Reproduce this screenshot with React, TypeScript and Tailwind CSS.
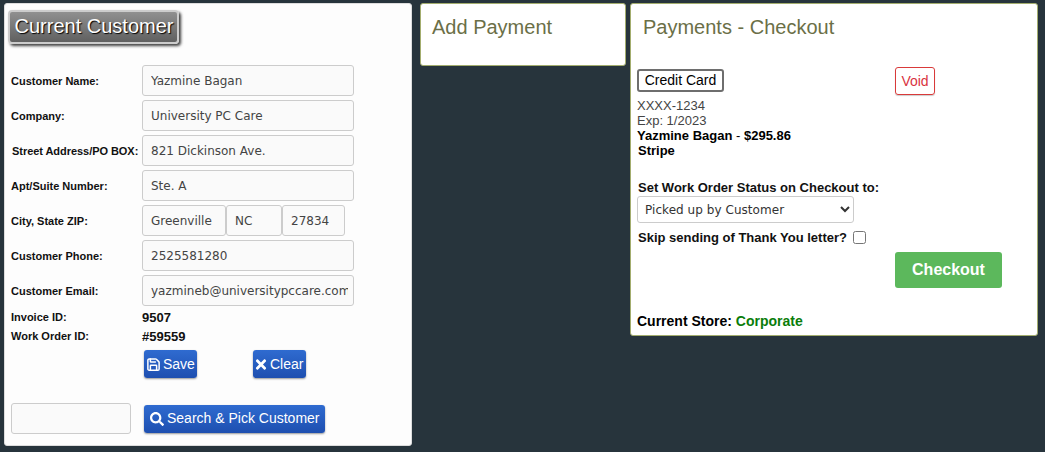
import React from 'react';
import { FaTimes, FaSearch } from 'react-icons/fa';
import { Save } from 'lucide-react';

const inputClass =
  "h-[31px] rounded-[3px] border border-[#ccc] bg-[#fafafa] pl-[8px] pr-[5px] font-['DejaVu_Sans',sans-serif] text-[12px] text-[#444] outline-none";

const blueButton =
  'flex h-[28px] items-center rounded-[3px] bg-gradient-to-b from-[#2f6bd0] to-[#1e4fb0] text-[14px] text-white shadow-[0_1px_2px_rgba(0,0,0,0.4)]';

const Field: React.FC<{ label: string; value: string; labelClass?: string }> = ({ label, value, labelClass = '' }) => (
  <div className="mb-[4px] flex h-[31px] items-center">
    <div className="w-[131px] shrink-0 pt-[1px]">
      <label className={`block text-[11px] font-bold text-[#111] ${labelClass}`}>{label}</label>
    </div>
    <input readOnly value={value} className={`${inputClass} w-[212px]`} />
  </div>
);

const App: React.FC = () => {
  return (
    <div className="flex h-[452px] w-[1045px] items-start overflow-hidden bg-[#27343c] pt-[3px] pl-[4px] font-['Liberation_Sans',Arial,sans-serif]">
      {/* customer panel */}
      <div className="h-[443px] w-[408px] shrink-0 rounded-[3px] border border-[#ddd] bg-[#fdfdfd] pl-[6px]">
        <div className="mt-[6px] -ml-[3px] h-[34px] w-[171px] rounded-[4px] border-2 border-[#ccc] bg-gradient-to-b from-[#909090] to-[#606060] pl-[1px] text-center text-[20px] leading-[29px] text-white shadow-[2px_2px_3px_rgba(0,0,0,0.75)] [text-shadow:1px_1px_1px_#000]">
          Current Customer
        </div>
        <div className="mt-[21px]">
          <Field label="Customer Name:" value="Yazmine Bagan" />
          <Field label="Company:" value="University PC Care" />
          <Field label="Street Address/PO BOX:" value="821 Dickinson Ave." labelClass="ml-[1px] tracking-[-0.05px]" />
          <Field label="Apt/Suite Number:" value="Ste. A" />
          <div className="mb-[4px] flex h-[31px] items-center">
            <label className="w-[131px] shrink-0 pt-[1px] text-[11px] font-bold text-[#111]">City, State ZIP:</label>
            <input readOnly value="Greenville" className={`${inputClass} w-[84px]`} />
            <input readOnly value="NC" className={`${inputClass} w-[56px]`} />
            <input readOnly value="27834" className={`${inputClass} w-[63px]`} />
          </div>
          <Field label="Customer Phone:" value="2525581280" />
          <Field label="Customer Email:" value="yazmineb@universitypccare.com" />
        </div>
        <div className="-mt-[2px] flex h-[19px] items-center">
          <span className="w-[131px] text-[11px] font-bold text-[#111]">Invoice ID:</span>
          <span className="text-[13px] font-bold text-[#111]">9507</span>
        </div>
        <div className="flex h-[19px] items-center">
          <span className="w-[131px] text-[11px] font-bold text-[#111]">Work Order ID:</span>
          <span className="text-[13px] font-bold text-[#111]">#59559</span>
        </div>
        <div className="mt-[4px] ml-[133px] flex">
          <button className={`${blueButton} w-[53px] gap-[2px] pl-[2px]`}>
            <Save size={15} strokeWidth={2.4} />
            Save
          </button>
          <button className={`${blueButton} ml-[56px] w-[53px] gap-[3px] pl-[2px]`}>
            <FaTimes className="h-[15px] w-[12px]" />
            Clear
          </button>
        </div>
        <div className="mt-[25px] flex items-center">
          <input readOnly className="h-[31px] w-[120px] rounded-[3px] border border-[#ccc] bg-[#fafafa]" />
          <button className={`${blueButton} ml-[13px] w-[181px] gap-[3px] pl-[6px]`}>
            <FaSearch className="h-[14px] w-[14px]" />
            Search &amp; Pick Customer
          </button>
        </div>
      </div>

      {/* add payment */}
      <div className="ml-[8px] h-[63px] w-[206px] shrink-0 rounded-[3px] border border-[#a3ad6e] bg-white pt-[10px] pl-[11px] text-[20px] leading-[26px] text-[#6b6f47]">
        Add Payment
      </div>

      {/* checkout */}
      <div className="ml-[4px] h-[333px] w-[408px] shrink-0 rounded-[3px] border border-[#a3ad6e] bg-white pl-[6px]">
        <div className="mt-[10px] ml-[6px] text-[20px] leading-[26px] text-[#6b6f47]">Payments - Checkout</div>
        <div className="mt-[27px] flex items-start">
          <div className="mt-[2px] h-[23px] w-[87px] rounded-[3px] border-2 border-[#6e6e6e] text-center text-[14px] leading-[19px] text-black">
            Credit Card
          </div>
          <div className="ml-[171px] h-[28px] w-[40px] rounded-[3px] border border-[#d93a3a] text-center text-[14px] leading-[26px] text-[#d9343f] shadow-[0_1px_1px_rgba(0,0,0,0.2)]">
            Void
          </div>
        </div>
        <div className="mt-[3px] text-[13px] leading-[15px] text-[#444]">XXXX-1234</div>
        <div className="text-[13px] leading-[15px] text-[#444]">Exp: 1/2023</div>
        <div className="text-[13px] font-bold leading-[15px] text-black">Yazmine Bagan <span className="font-normal">-</span> $295.86</div>
        <div className="ml-[1px] text-[13px] font-bold leading-[15px] text-black">Stripe</div>
        <div className="mt-[22px] ml-[1px] text-[13px] font-bold leading-[16px] text-[#111]">Set Work Order Status on Checkout to:</div>
        <select className="block h-[27px] w-[217px] rounded-[3px] border border-[#ccc] bg-white pl-[3px] font-['DejaVu_Sans',sans-serif] text-[12px] tracking-[0.05px] text-[#333]">
          <option>Picked up by Customer</option>
        </select>
        <div className="mt-[6px] ml-[1px] flex h-[17px] items-center text-[13px] font-bold text-[#111]">
          Skip sending of Thank You letter?
          <input type="checkbox" className="ml-[6px] h-[13px] w-[13px]" />
        </div>
        <button className="mt-[6px] ml-[258px] block h-[36px] w-[107px] rounded-[3px] bg-[#5cb85c] text-[16px] font-bold text-white">
          Checkout
        </button>
        <div className="mt-[25px] text-[14px] font-bold leading-[16px] text-black">
          Current Store: <span className="text-[#0a7d0a]">Corporate</span>
        </div>
      </div>
    </div>
  );
};

export default App;
